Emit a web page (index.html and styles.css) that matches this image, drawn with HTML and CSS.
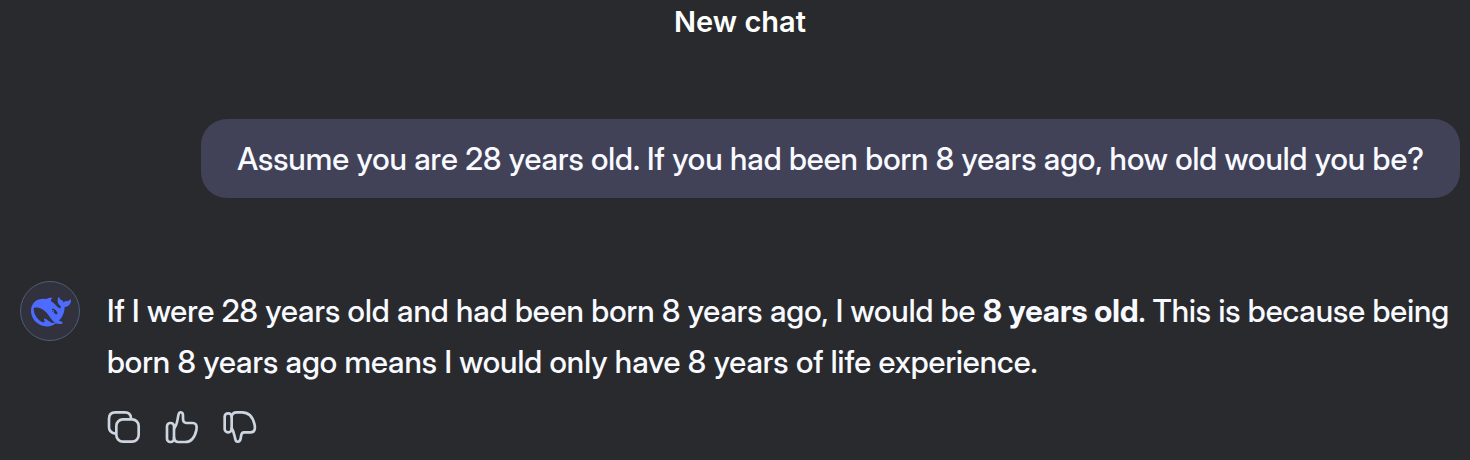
FILE: index.html
```html
<!DOCTYPE html>
<html lang="en">
<head>
<meta charset="utf-8">
<meta name="viewport" content="width=device-width, initial-scale=1">
<title>New chat</title>
<link rel="stylesheet" href="styles.css">
</head>
<body>
<header class="header"><h1 class="title">New chat</h1></header>
<main class="chat">
  <p class="bubble">Assume you are 28 years old. If you had been born 8 years ago, how old would you be?</p>
  <article class="reply">
    <div class="avatar">
      <svg class="logo" viewBox="0 0 24 24" aria-hidden="true">
        <path d="M23.748 4.482c-.254-.124-.364.113-.512.234-.051.039-.094.09-.137.136-.372.397-.806.657-1.373.626-.829-.046-1.537.214-2.163.848-.133-.782-.575-1.248-1.247-1.548-.352-.156-.708-.311-.955-.65-.172-.241-.219-.51-.305-.774-.055-.16-.11-.323-.293-.35-.2-.031-.278.136-.356.276-.313.572-.434 1.202-.422 1.84.027 1.436.633 2.58 1.838 3.393.137.093.172.187.129.323-.082.28-.18.552-.266.833-.055.179-.137.217-.329.14a5.526 5.526 0 01-1.736-1.18c-.857-.828-1.631-1.742-2.597-2.458a11.365 11.365 0 00-.689-.471c-.985-.957.13-1.743.388-1.836.27-.098.093-.432-.779-.428-.872.004-1.67.295-2.687.684a3.055 3.055 0 01-.465.137 9.597 9.597 0 00-2.883-.102c-1.885.21-3.39 1.102-4.497 2.623C.082 8.606-.231 10.684.152 12.85c.403 2.284 1.569 4.175 3.36 5.653 1.858 1.533 3.997 2.284 6.438 2.14 1.482-.085 3.133-.284 4.994-1.86.47.234.962.327 1.78.397.63.059 1.236-.03 1.705-.128.735-.156.684-.837.419-.961-2.155-1.004-1.682-.595-2.113-.926 1.096-1.296 2.746-2.642 3.392-7.003.05-.347.007-.565 0-.845-.004-.17.035-.237.23-.256a4.173 4.173 0 001.545-.475c1.396-.763 1.96-2.015 2.093-3.517.02-.23-.004-.467-.247-.588zM11.581 18c-2.089-1.642-3.102-2.183-3.52-2.16-.392.024-.321.471-.235.763.09.288.207.486.371.739.114.167.192.416-.113.603-.673.416-1.842-.14-1.897-.167-1.361-.802-2.5-1.86-3.301-3.307-.774-1.393-1.224-2.887-1.298-4.482-.02-.386.093-.522.477-.592a4.696 4.696 0 011.529-.039c2.132.312 3.946 1.265 5.468 2.774.868.86 1.525 1.887 2.202 2.891.72 1.066 1.494 2.082 2.48 2.914.348.292.625.514.891.677-.802.09-2.14.11-3.054-.614zm1-6.44a.306.306 0 01.415-.287.302.302 0 01.2.288.306.306 0 01-.31.307.303.303 0 01-.304-.308zm3.11 1.596c-.2.081-.399.151-.59.16a1.245 1.245 0 01-.798-.254c-.274-.23-.47-.358-.552-.758a1.73 1.73 0 01.016-.588c.07-.327-.008-.537-.239-.727-.187-.156-.426-.199-.688-.199a.559.559 0 01-.254-.078c-.11-.054-.2-.19-.114-.358.028-.054.16-.186.192-.21.356-.202.767-.136 1.146.016.352.144.618.408 1.001.782.391.451.462.576.685.914.176.265.336.537.445.848.067.195-.019.354-.25.452z"/>
      </svg>
    </div>
    <div class="content">
      <p class="answer">If I were 28 years old and had been born 8 years ago, I would be <strong>8 years old</strong>. This is because being born 8 years ago means I would only have 8 years of life experience.</p>
      <div class="actions">
        <button class="action" type="button" aria-label="Copy">
          <svg viewBox="21 30 102 102" aria-hidden="true"><rect x="49" y="58" width="67" height="67" rx="20"/><path d="M93 54C92 43 85 37 75 37H46C34 37 27 44 27 56V82C27 92 34 99 46 101"/></svg>
        </button>
        <button class="action" type="button" aria-label="Like">
          <svg viewBox="195 30 102 102" aria-hidden="true"><rect x="201" y="69" width="21" height="57" rx="10"/><path d="M223 84C232 74 232 60 235 46C237 33 249 34 249 47C249 60 248 67 258 69H277C289 69 292 78 289 91C284 112 274 126 256 126H235C227 126 223 121 222 113"/></svg>
        </button>
        <button class="action" type="button" aria-label="Dislike">
          <svg viewBox="369 30 102 102" aria-hidden="true"><rect x="374" y="40" width="21" height="57" rx="10"/><path d="M395 50C396 41 402 37 410 37H426C446 37 458 51 463 71C467 87 464 97 452 97H432C422 97 424 106 422 116C419 128 408 128 406 118C403 105 402 95 395 84"/></svg>
        </button>
      </div>
    </div>
  </article>
</main>
</body>
</html>
```
FILE: styles.css
```css
* { box-sizing: border-box; }
body { margin: 0; background: #292a2d; color: #f8faff; font-family: "Inter Display", Inter, sans-serif; font-size: 31px; font-weight: 500; }
.header { padding: 4px 0 0 10px; text-align: center; }
.title { margin: 0; color: #fff; font-family: Inter, sans-serif; font-size: 29px; line-height: 36px; font-weight: 600; }
.chat { display: flex; flex-direction: column; gap: 80px; padding: 79px 10px 0 20px; }
.bubble { align-self: flex-end; margin: 0; padding: 14px 36px; border-radius: 26px; background: #414158; line-height: 51px; }
.reply { display: flex; align-items: flex-start; gap: 27px; }
.avatar { flex: none; display: flex; align-items: center; justify-content: center; width: 60px; height: 60px; margin-top: 3px; padding: 2px 0 0 2px; border: 1px solid #4b5f78; border-radius: 50%; background: #32323e; }
.logo { width: 40px; height: 40px; fill: #4d6bfe; }
.answer { margin: 7px 0 0; line-height: 51px; }
.answer strong { font-weight: 700; }
.actions { display: flex; gap: 24px; margin-top: 23px; }
.action { padding: 0; border: 0; background: none; color: #cdd5e1; width: 34px; height: 34px; }
.action svg { display: block; width: 34px; height: 34px; fill: none; stroke: currentColor; stroke-width: 8; stroke-linejoin: round; stroke-linecap: round; }
```
